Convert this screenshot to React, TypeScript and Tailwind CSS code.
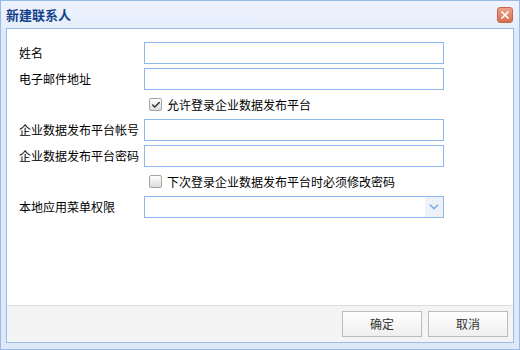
import { Check, ChevronDown, X } from 'lucide-react';

const font = { fontFamily: '"Noto Sans CJK SC", "Liberation Sans", sans-serif' };

function TextRow({ label }: { label: string }) {
    return (
        <div className="flex items-center h-[22px]">
            <span className="w-[125px] shrink-0 text-[12px] text-black">{label}</span>
            <div className="w-[300px] h-[22px] border border-[#8eb8ec] bg-white" />
        </div>
    );
}

function CheckRow({ label, checked }: { label: string; checked?: boolean }) {
    return (
        <div className="flex items-center h-[21px] pl-[130px]">
            <span className="w-[13px] h-[13px] rounded-[2px] border border-[#a6a6a6] bg-gradient-to-b from-[#ffffff] to-[#dcdcdc] flex items-center justify-center">
                {checked && <Check size={10} strokeWidth={3.5} className="text-[#333]" />}
            </span>
            <span className="ml-[5px] text-[12px] text-black">{label}</span>
        </div>
    );
}

export default function App() {
    return (
        <div style={font} className="w-[520px] h-[350px] border border-[#99bbe8] bg-[#dfe8f6] flex flex-col">
            {/* Title bar */}
            <div className="h-[27px] flex items-center justify-between pl-[5px] pr-[6px] bg-gradient-to-b from-[#eef3fd] to-[#e6edfb]">
                <span className="text-[13px] font-bold text-[#15428b]">新建联系人</span>
                <span className="w-[16px] h-[16px] rounded-[3px] border border-[#c4674d] bg-gradient-to-b from-[#eda188] to-[#d6704f] flex items-center justify-center">
                    <X size={12} strokeWidth={3.5} className="text-white" />
                </span>
            </div>

            {/* Body */}
            <div className="flex-1 mx-[5px] mb-[6px] border border-[#99bbe8] flex flex-col">
                <div className="flex-1 bg-white pt-[13px] pl-[12px] flex flex-col gap-[4px]">
                    <TextRow label="姓名" />
                    <TextRow label="电子邮件地址" />
                    <CheckRow label="允许登录企业数据发布平台" checked />
                    <TextRow label="企业数据发布平台帐号" />
                    <TextRow label="企业数据发布平台密码" />
                    <CheckRow label="下次登录企业数据发布平台时必须修改密码" />
                    <div className="flex items-center h-[22px]">
                        <span className="w-[125px] shrink-0 text-[12px] text-black">本地应用菜单权限</span>
                        <div className="w-[300px] h-[22px] border border-[#8eb8ec] bg-white flex justify-end">
                            <span className="w-[18px] h-full bg-[#edf2f9] flex items-center justify-center">
                                <ChevronDown size={14} strokeWidth={3} className="text-[#7db0ea]" />
                            </span>
                        </div>
                    </div>
                </div>

                {/* Footer */}
                <div className="h-[37px] border-t border-[#dcdcdc] bg-[#f4f4f4] flex justify-end gap-[6px] pt-[5px] pr-[5px]">
                    <button className="w-[80px] h-[26px] border border-[#bcbcbc] bg-gradient-to-b from-[#ffffff] to-[#efefef] text-[12px] text-[#333]">
                        确定
                    </button>
                    <button className="w-[80px] h-[26px] border border-[#bcbcbc] bg-gradient-to-b from-[#ffffff] to-[#efefef] text-[12px] text-[#333]">
                        取消
                    </button>
                </div>
            </div>
        </div>
    );
}
